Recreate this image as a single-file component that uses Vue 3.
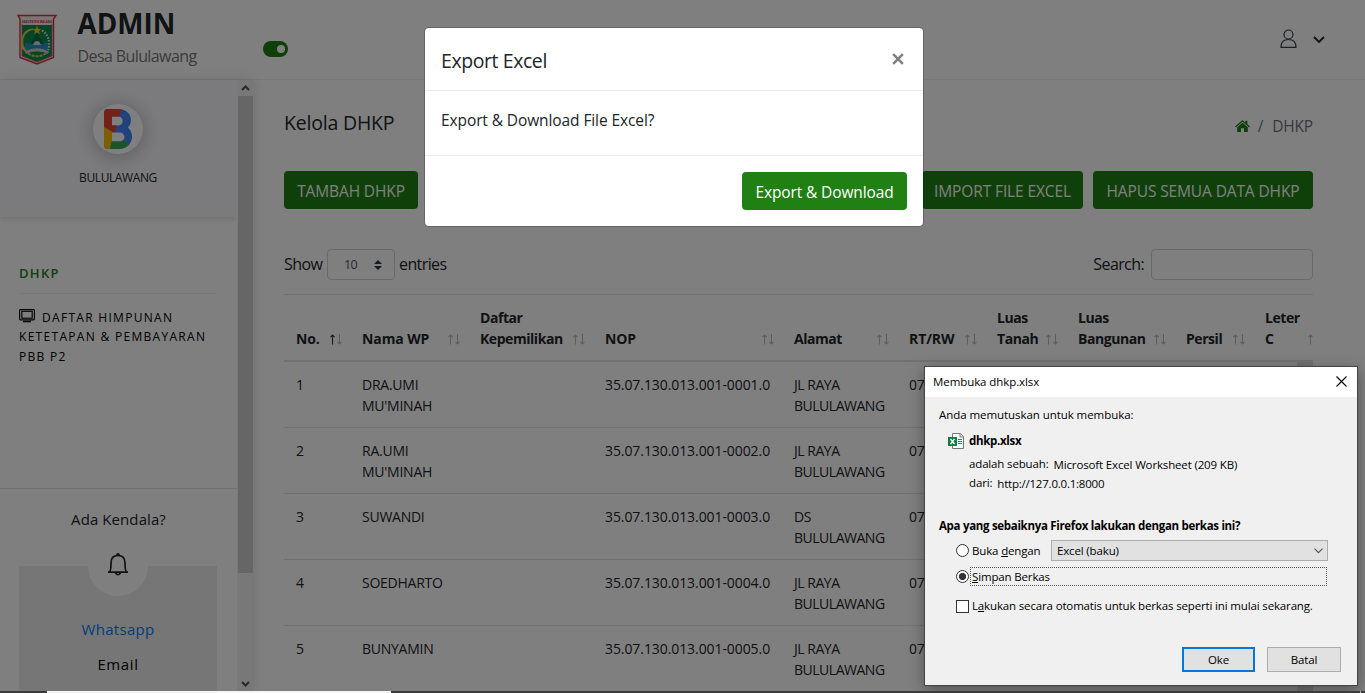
<script setup>
const columns = [
  { lines: ['No.'], width: 66, active: true },
  { lines: ['Nama WP'], width: 118 },
  { lines: ['Daftar', 'Kepemilikan'], width: 125 },
  { lines: ['NOP'], width: 189 },
  { lines: ['Alamat'], width: 115 },
  { lines: ['RT/RW'], width: 88 },
  { lines: ['Luas', 'Tanah'], width: 81 },
  { lines: ['Luas', 'Bangunan'], width: 108 },
  { lines: ['Persil'], width: 79 },
  { lines: ['Leter', 'C'], width: 73 },
]
const rows = [
  ['1', "DRA.UMI MU'MINAH", '', '35.07.130.013.001-0001.0', 'JL RAYA BULULAWANG', '07'],
  ['2', "RA.UMI MU'MINAH", '', '35.07.130.013.001-0002.0', 'JL RAYA BULULAWANG', '07'],
  ['3', 'SUWANDI', '', '35.07.130.013.001-0003.0', 'DS BULULAWANG', '07'],
  ['4', 'SOEDHARTO', '', '35.07.130.013.001-0004.0', 'JL RAYA BULULAWANG', '07'],
  ['5', 'BUNYAMIN', '', '35.07.130.013.001-0005.0', 'JL RAYA BULULAWANG', '07'],
]
</script>

<template>
  <div class="screen">
    <header class="topbar">
      <svg class="crest" width="40" height="52" viewBox="0 0 40 52">
        <path d="M1 1.500H39L36.500 5V43.500L20 50L3 43.500V5Z" fill="#eee" stroke="#d8303e" stroke-width="1.400" />
        <path d="M5 11H35V42L20 48L5 42Z" fill="#078a4d" />
        <path d="M5 10V42L20 48.200L35 42V10" fill="none" stroke="#d8606a" stroke-width="0.800" />
        <path d="M8 29H32V37H8Z" fill="#2d8fc0" />
        <path d="M20 18L13 30H27Z" fill="#0b6b46" />
        <path d="M17.500 28Q20 26 22.500 28L24 31H16Z" fill="#cfd6d6" />
        <path d="M16 15Q4 19 6 31Q8 37 12 39Q3 37 4.500 27Q6 15 16 15Z" fill="#e8d14a" stroke="#e8d14a" stroke-width="0.800" />
        <path d="M20 11.500L21.300 15H24.500L22 17L23 20.500L20 18.500L17 20.500L18 17L15.500 15H18.700Z" fill="#f0c51c" />
        <path d="M25 16.500Q34 22 31.500 36" fill="none" stroke="#dfe6e1" stroke-width="2.200" stroke-dasharray="1.600 1.400" />
        <path d="M8 37.500Q20 31 32 37.500L31 40Q20 34.500 9 40Z" fill="#ccc" />
        <path d="M11 39.500Q20 45 29 39.500" fill="none" stroke="#e8c93c" stroke-width="2" stroke-dasharray="3 1" />
        <text x="5" y="8.600" textLength="30" lengthAdjust="spacingAndGlyphs" class="crest-text">KABUPATEN MALANG</text>
      </svg>
      <div class="brand">
        <strong>ADMIN</strong>
        <span>Desa Bululawang</span>
      </div>
      <div class="toggle"><i></i></div>
      <div class="user">
        <svg width="18" height="20" viewBox="0 0 18 20" fill="none" stroke="#3c4248" stroke-width="1.200">
          <circle cx="8.500" cy="5.500" r="4.500" />
          <path d="M1 18.400Q1 10.500 8.500 10.500Q16 10.500 16 18.400Z" />
        </svg>
        <svg width="12" height="8" viewBox="0 0 12 8" fill="none" stroke="#212529" stroke-width="1.900">
          <path d="M1 1L6 6L11 1" />
        </svg>
      </div>
    </header>

    <div class="body">
      <aside class="sidebar">
        <div class="side-content">
          <div class="profile">
            <div class="avatar">
              <svg width="28" height="40" viewBox="0 0 28 40">
                <defs>
                  <clipPath id="letter">
                    <path clip-rule="evenodd" d="M0 4Q0 0 4 0H14C27 0 30 12 24 18.500C32 26 28 40 14.500 40H4Q0 40 0 36ZM8 7.500V16.500H14.500C20 16.500 20 7.500 14.500 7.500ZM8 23.500V32.500H15.500C22 32.500 22 23.500 15.500 23.500Z" />
                  </clipPath>
                </defs>
                <g clip-path="url(#letter)">
                  <path d="M0 0H28V40H0Z" fill="#4285f4" />
                  <path d="M0 0H17.500L11 23H8L0 18.500Z" fill="#e94335" />
                  <path d="M0 18L8 22.500V32L6 40H0Z" fill="#fbbc05" />
                  <path d="M8.500 31.500H19.500L28 35.500V40H6Z" fill="#34a853" />
                </g>
              </svg>
            </div>
            <span>BULULAWANG</span>
          </div>
          <nav class="menu">
            <h6>DHKP</h6>
            <a>
              <svg width="16" height="14" viewBox="0 0 16 14" fill="none" stroke="#111" stroke-width="1.200">
                <rect x="0.600" y="0.600" width="14.800" height="10.300" rx="0.800" />
                <rect x="2.800" y="2.300" width="10.400" height="6.900" />
                <path d="M4 12.500H12" stroke-width="1.600" />
              </svg>
              <span>DAFTAR HIMPUNAN</span>
              <span>KETETAPAN &amp; PEMBAYARAN</span>
              <span>PBB P2</span>
            </a>
          </nav>
          <div class="help">
            <h5>Ada Kendala?</h5>
            <div class="help-card">
              <div class="bell">
                <svg width="22" height="23" viewBox="0 0 22 23" fill="none" stroke="#212529" stroke-width="1.700">
                  <path d="M1 19.200H21M2.500 19C4 17.500 4 16 4 10C4 5 6 2.500 11 2.500C16 2.500 18 5 18 10C18 16 18 17.500 19.500 19" />
                  <path d="M9.500 2L11 0.800L12.500 2M8.500 20Q11 23.500 13.500 20" />
                </svg>
              </div>
              <a class="wa">Whatsapp</a>
              <a>Email</a>
            </div>
          </div>
        </div>
        <div class="scrollbar">
          <svg width="9" height="6" viewBox="0 0 9 6"><path d="M1 5L4.500 1.500L8 5" /></svg>
          <i></i>
          <svg width="9" height="6" viewBox="0 0 9 6"><path d="M1 1L4.500 4.500L8 1" /></svg>
        </div>
      </aside>

      <main class="main">
        <div class="heading">
          <h4>Kelola DHKP</h4>
          <div class="crumbs">
            <svg width="15" height="12" viewBox="0 0 15 12" fill="#208014">
              <path d="M7.500 0L10.300 2.400V0.800H12.400V4.200L15 6.500L14.200 7.400L7.500 1.700L0.800 7.400L0 6.500Z" />
              <path d="M7.500 2.800L12.800 7.300V12H9V8.300H6V12H2.200V7.300Z" />
            </svg>
            <span class="slash">/</span><span>DHKP</span>
          </div>
        </div>
        <div class="actions">
          <button class="btn tambah">TAMBAH DHKP</button>
          <button class="btn import">IMPORT FILE EXCEL</button>
          <button class="btn hapus">HAPUS SEMUA DATA DHKP</button>
        </div>
        <div class="filters">
          <div class="length">
            <span class="show">Show</span>
            <div class="select">
              <span>10</span>
              <svg width="8" height="10" viewBox="0 0 8 10" fill="#343a40"><path d="M0 4L4 0L8 4ZM0 6L4 10L8 6Z" /></svg>
            </div>
            <span class="entries">entries</span>
          </div>
          <div class="search"><span>Search:</span><div class="field"></div></div>
        </div>
        <div class="table-wrap">
          <table>
            <colgroup><col v-for="(c, i) in columns" :key="i" :style="{ width: c.width + 'px' }" /></colgroup>
            <thead>
              <tr>
                <th v-for="(c, i) in columns" :key="i">
                  <div class="th">
                    <span class="label"><span v-for="l in c.lines" :key="l">{{ l }}</span></span>
                    <svg width="13" height="11" viewBox="0 0 13 11" fill="none" stroke-width="1.100">
                      <path d="M2.500 10.500V1M0.500 3.100L2.500 1L4.500 3.100" :stroke="c.active ? '#333' : '#bcbcbc'" />
                      <path d="M9.500 0V10M7.500 7.900L9.500 10L11.500 7.900" stroke="#bcbcbc" />
                    </svg>
                  </div>
                </th>
              </tr>
            </thead>
            <tbody>
              <tr v-for="r in rows" :key="r[0]">
                <td v-for="(c, i) in columns" :key="i" :class="{ nop: i === 3, alamat: i === 4 }">{{ r[i] }}</td>
              </tr>
            </tbody>
          </table>
          <div class="table-scroll"></div>
        </div>
      </main>
    </div>

    <div class="backdrop"></div>

    <section class="modal">
      <div class="modal-head">
        <h5>Export Excel</h5>
        <svg width="12" height="12" viewBox="0 0 12 12" stroke="#7f7f7f" stroke-width="2.500"><path d="M1.200 1.200L10.800 10.800M10.800 1.200L1.200 10.800" /></svg>
      </div>
      <p>Export &amp; Download File Excel?</p>
      <div class="modal-foot"><button class="btn export">Export &amp; Download</button></div>
    </section>

    <section class="dialog">
      <div class="title">
        <span>Membuka dhkp.xlsx</span>
        <svg width="11" height="11" viewBox="0 0 11 11" stroke="#000" stroke-width="1.100"><path d="M0.500 0.500L10.500 10.500M10.500 0.500L0.500 10.500" /></svg>
      </div>
      <div class="dialog-body">
        <p>Anda memutuskan untuk membuka:</p>
        <div class="file">
          <svg width="16" height="16" viewBox="0 0 16 16">
            <path d="M4.500 0.500H12.500L15.500 3.500V15.500H4.500Z" fill="#fff" stroke="#777" />
            <path d="M12 0.500V4H15.500" fill="none" stroke="#777" />
            <path d="M10 6.500H14M10 8.500H14M10 10.500H14" stroke="#169154" />
            <rect y="4" width="9" height="9" fill="#107c41" />
            <path d="M2.500 6L6.500 11M6.500 6L2.500 11" stroke="#fff" stroke-width="1.300" />
          </svg>
          <b>dhkp.xlsx</b>
        </div>
        <div class="meta"><span>adalah sebuah:</span><span class="low">Microsoft Excel Worksheet (209 KB)</span></div>
        <div class="meta"><span>dari:</span><span class="low url">http://127.0.0.1:8000</span></div>
        <p class="question">Apa yang sebaiknya Firefox lakukan dengan berkas ini?</p>
        <div class="option open">
          <i class="radio"></i><span class="open-label">Buka <u>d</u>engan</span>
          <div class="combo"><span>Excel (baku)</span>
            <svg width="9" height="6" viewBox="0 0 9 6" fill="none" stroke="#555" stroke-width="1.100"><path d="M0.500 0.700L4.500 4.700L8.500 0.700" /></svg>
          </div>
        </div>
        <div class="option save"><i class="radio on"></i><span class="focus"><span><u>S</u>impan Berkas</span></span></div>
        <div class="option auto"><i class="check"></i><span>L<u>a</u>kukan secara otomatis untuk berkas seperti ini mulai sekarang.</span></div>
        <div class="buttons"><button class="primary">Oke</button><button>Batal</button></div>
      </div>
    </section>

    <div class="taskbar"><i></i><b></b></div>
  </div>
</template>

<style>
body { margin: 0; overflow: hidden; }
</style>

<style scoped>
* { box-sizing: border-box; }
.screen { position: relative; width: 1365px; height: 693px; overflow: hidden; background: #fff; color: #212529; font-family: "Open Sans", "Noto Sans", sans-serif; font-size: 16px; display: flex; flex-direction: column; }
h4, h5, h6, p { margin: 0; font-weight: 400; }
svg { display: block; flex: none; }
span { white-space: nowrap; }
button { font-family: inherit; }

.topbar { height: 80px; flex: none; display: flex; border-bottom: 1px solid #f2f2f2; }
.crest { margin: 14px 0 0 17px; overflow: visible; }
.crest-text { font-size: 4px; font-weight: 700; fill: #d8303e; }
.brand { margin-left: 20.500px; width: 185.500px; display: flex; flex-direction: column; }
.brand strong { font-size: 27.800px; line-height: 36px; margin-top: 5px; }
.brand span { font-size: 16px; line-height: 24px; margin-top: 3px; color: #777; letter-spacing: -0.600px; }
.toggle { width: 25px; height: 16px; margin-top: 41px; border-radius: 8px; background: #208014; padding: 4px 3px; display: flex; justify-content: flex-end; }
.toggle i { width: 8px; height: 8px; border-radius: 50%; background: #fff; }
.user { margin-left: auto; padding-right: 40px; display: flex; align-items: flex-start; gap: 15px; padding-top: 29px; }
.user svg:last-child { margin-top: 7px; }

.body { flex: 1; min-height: 0; display: flex; }
.sidebar { width: 253px; flex: none; display: flex; box-shadow: 0 0 12px rgba(0, 0, 0, .14); }
.side-content { width: 238px; border-right: 1px solid #f4f4f4; overflow: hidden; display: flex; flex-direction: column; }
.profile { height: 137px; flex: none; background: #f7f7fc; box-shadow: 0 2px 6px rgba(0, 0, 0, .12); display: flex; flex-direction: column; align-items: center; padding: 24px 1px 0 0; font-size: 12px; }
.avatar { width: 50px; height: 50px; flex: none; border-radius: 50%; background: #fff; box-shadow: 0 2px 20px rgba(0, 0, 0, .28); display: flex; align-items: center; justify-content: center; }
.profile span { margin-top: 15px; line-height: 18px; letter-spacing: -0.400px; }
.menu { height: 272px; flex: none; border-bottom: 1px solid #e2e2e2; padding: 47px 20px 0 19px; }
.menu h6 { height: 30px; font-size: 13px; line-height: 18px; font-weight: 600; letter-spacing: 1.300px; color: #208014; border-bottom: 1px solid #eee; }
.menu a { display: block; position: relative; margin-top: 14px; font-size: 12px; line-height: 19.400px; letter-spacing: 1.300px; color: #000; }
.menu a svg { position: absolute; left: 0; top: 1px; }
.menu a span { display: block; }
.menu a span:first-of-type { padding-left: 23px; }
.help { display: flex; flex-direction: column; align-items: center; }
.help h5 { margin-top: 18px; font-size: 15px; line-height: 24px; letter-spacing: .08px; }
.help-card { width: 198px; height: 140px; margin-top: 35px; margin-left: -1px; background: #ededed; display: flex; flex-direction: column; align-items: center; font-size: 15px; letter-spacing: .600px; color: #000; }
.bell { width: 60px; height: 60px; margin-top: -30px; flex: none; border-radius: 50%; background: #fff; display: flex; align-items: center; justify-content: center; padding-bottom: 4px; }
.help-card a { line-height: 24px; margin-top: 11px; }
.help-card .wa { margin-top: 21px; color: #007bff; letter-spacing: .300px; }
.scrollbar { width: 15px; background: #f0f0f0; display: flex; flex-direction: column; align-items: center; padding: 5px 0; }
.scrollbar svg { fill: none; stroke: #505050; stroke-width: 2; }
.scrollbar i { width: 15px; height: 477px; margin: 5px 0 108px; background: #cdcdcd; }

.main { flex: 1; min-width: 0; padding: 31px 52px 0 31px; display: flex; flex-direction: column; }
.heading { display: flex; justify-content: space-between; height: 60px; }
.heading h4 { font-size: 19.500px; line-height: 24px; letter-spacing: -0.200px; }
.crumbs { display: flex; align-items: center; height: 30px; color: #6c757d; font-size: 15.500px; letter-spacing: -0.200px; }
.crumbs .slash { margin: 0 9px 0 8px; }
.actions { display: flex; height: 38px; }
.btn { height: 38px; padding: 3px 0 0; border: 0; border-radius: 4px; background: #208014; color: #fff; font-size: 15.500px; line-height: 35px; letter-spacing: -0.120px; white-space: nowrap; }
.tambah { width: 134px; }
.import { width: 161px; margin-left: auto; }
.hapus { width: 220px; margin-left: 10px; }
.filters { display: flex; justify-content: space-between; margin-top: 40px; height: 45px; }
.length, .search { display: flex; line-height: 30px; height: 31px; letter-spacing: -0.600px; }
.length > span { line-height: 30px; }
.show { width: 39px; }
.select { width: 68px; height: 31px; margin: 0 4px 0 4px; border: 1px solid #ced4da; border-radius: 4px; display: flex; align-items: center; justify-content: space-between; padding: 1px 12px 0 16px; font-size: 12.500px; color: #495057; }
.field { width: 162px; height: 31px; margin-left: 7px; border: 1px solid #ced4da; border-radius: 4px; }
.table-wrap { position: relative; flex: 1; min-height: 0; overflow: hidden; }
.table-scroll { position: absolute; right: 0; top: 68px; bottom: 0; width: 16px; background: #e3e3e3; }
table { width: 1042px; table-layout: fixed; border-collapse: separate; border-spacing: 0; font-size: 14px; line-height: 21px; }
th { height: 68px; padding: 11px 12px; border-top: 1px solid #dee2e6; border-bottom: 2px solid #dee2e6; text-align: left; vertical-align: bottom; font-weight: 700; letter-spacing: -0.450px; }
th:first-child, th:nth-child(2), th:nth-child(4), th:nth-child(6) { letter-spacing: -0.100px; }
.th { position: relative; }
.label span { display: block; }
.th svg { position: absolute; right: -5px; bottom: 4px; }
th:last-child svg { right: -7px; }
td { height: 66px; padding: 12px 12px 11px; border-bottom: 1px solid #dee2e6; vertical-align: top; letter-spacing: -0.250px; }
td.nop { letter-spacing: -0.080px; white-space: nowrap; }
td.alamat { letter-spacing: -0.480px; }

.backdrop { position: absolute; inset: 0; background: rgba(0, 0, 0, .5); }

.modal { position: absolute; left: 425px; top: 28px; width: 498px; height: 198px; border-radius: 4px; background: #fff; box-shadow: 0 0 0 1px rgba(0, 0, 0, .2); }
.modal-head { height: 63px; border-bottom: 1px solid #e9ecef; padding: 0 19px 0 16px; display: flex; align-items: center; justify-content: space-between; }
.modal-head h5 { font-size: 19.500px; padding-top: 3px; letter-spacing: -0.420px; }
.modal p { height: 65px; border-bottom: 1px solid #e9ecef; padding: 17px 16px; line-height: 25px; font-size: 15.500px; letter-spacing: -0.100px; }
.modal-foot { padding: 16px; display: flex; justify-content: flex-end; }
.export { width: 165px; }

.dialog { position: absolute; left: 924px; top: 366px; width: 434px; height: 320px; border: 1px solid #444; background: #f0f0f0; color: #000; font-size: 11.500px; line-height: 16px; letter-spacing: -0.150px; box-shadow: 0 4px 14px rgba(0, 0, 0, .35); }
.title { height: 30px; background: #fff; display: flex; align-items: center; justify-content: space-between; padding: 0 10px 2px 8px; letter-spacing: -0.080px; }
.title span { padding-top: 2px; }
.dialog-body { padding: 10px 14px 0; display: flex; flex-direction: column; }
.dialog-body > p:first-child { letter-spacing: -0.060px; }
.file { display: flex; align-items: center; gap: 5px; margin: 9px 0 0 9px; }
.file b { padding-top: 1px; letter-spacing: -0.300px; }
.meta { display: flex; margin-left: 30px; height: 19px; gap: 5px; }
.file + .meta { margin-top: 7px; }
.low { padding-top: 1px; }
.url { letter-spacing: -0.220px; }
.dialog-body .question { margin-top: 24px; font-weight: 700; white-space: nowrap; letter-spacing: -0.310px; }
.option { display: flex; align-items: center; margin-left: 17px; }
.open { height: 21px; margin-top: 6px; }
.radio { width: 13px; height: 13px; border: 1px solid #333; border-radius: 50%; background: #fff; margin-right: 3px; flex: none; }
.on { background: radial-gradient(circle, #333 0 3.300px, #fff 3.900px); }
.open-label { width: 79px; }
.combo { width: 277px; height: 21px; border: 1px solid #adadad; background: #e1e1e1; display: flex; align-items: center; justify-content: space-between; padding: 0 4px 0 5px; }
.save { height: 19px; margin-top: 6px; }
.focus { width: 357px; height: 19px; border: 1px dotted #555; display: flex; align-items: center; margin-left: -2px; padding-left: 1px; }
.auto { height: 16px; margin-top: 12px; }
.check { width: 13px; height: 13px; border: 1px solid #333; background: #fff; margin-right: 3px; flex: none; }
.buttons { display: flex; justify-content: flex-end; gap: 12px; margin: 33px 2px 0 0; }
.buttons button { width: 74px; height: 25px; padding: 0; border: 1px solid #adadad; background: #e1e1e1; font-size: 11.500px; letter-spacing: -0.150px; }
.buttons .primary { width: 73px; border: 2px solid #0078d7; }

.taskbar { position: absolute; left: 0; right: 0; bottom: 0; height: 2px; background: #3b3b3b; display: flex; justify-content: space-between; padding: 0 4px 0 47px; }
.taskbar i { width: 344px; background: #f5f5f5; }
.taskbar b { width: 1px; background: #aaa; }
</style>
